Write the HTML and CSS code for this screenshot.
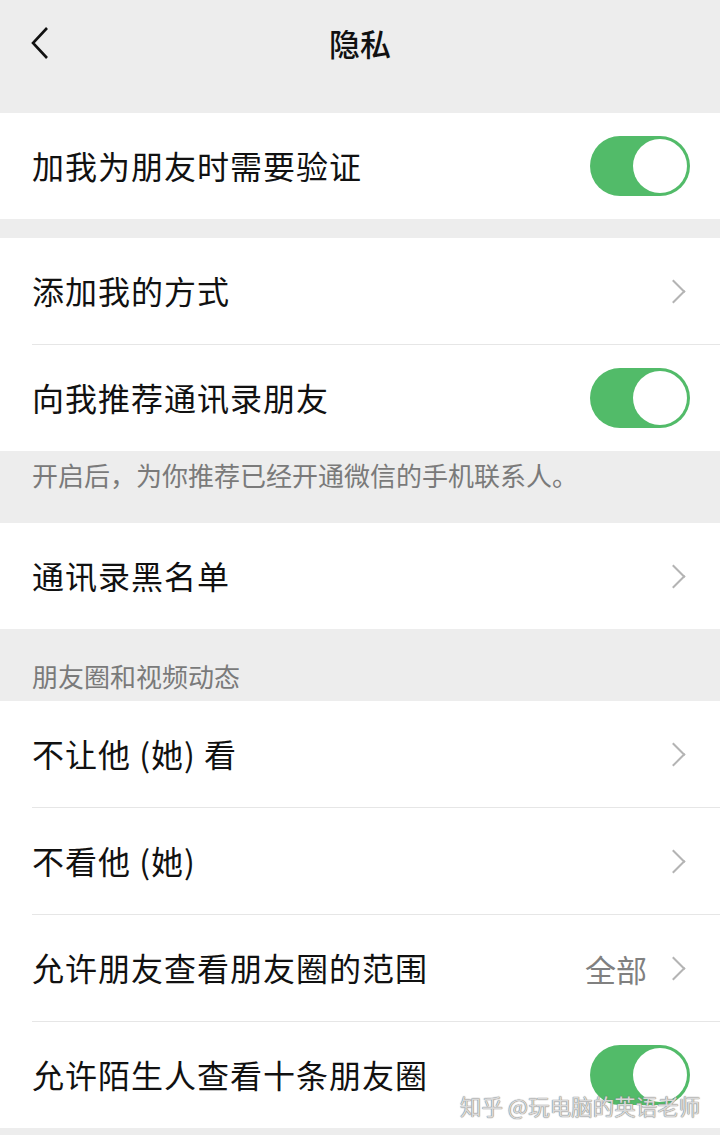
FILE: index.html
```html
<!DOCTYPE html>
<html lang="zh-CN">
  <head>
    <meta charset="UTF-8" />
    <meta name="viewport" content="width=device-width, initial-scale=1.0" />
    <title>隐私</title>
    <link rel="stylesheet" href="styles.css">
  </head>
  <body>
    <div class="nav">
      <svg class="back" width="24" height="34" viewBox="0 0 24 34">
        <path d="M19 2 L5 17 L19 32" fill="none" stroke="#111" stroke-width="2.6" />
      </svg>
      <div class="title">隐私</div>
    </div>

    <div class="group">
      <div class="cell">
        <div class="cell-body">
          <span class="label">加我为朋友时需要验证</span>
          <span class="switch on"></span>
        </div>
      </div>
    </div>

    <div class="group gap">
      <div class="cell">
        <div class="cell-body">
          <span class="label">添加我的方式</span>
          <span class="arrow"></span>
        </div>
      </div>
      <div class="cell">
        <div class="cell-body">
          <span class="label">向我推荐通讯录朋友</span>
          <span class="switch on"></span>
        </div>
      </div>
    </div>
    <div class="tip">开启后，为你推荐已经开通微信的手机联系人。</div>

    <div class="group">
      <div class="cell">
        <div class="cell-body">
          <span class="label">通讯录黑名单</span>
          <span class="arrow"></span>
        </div>
      </div>
    </div>
    <div class="section">朋友圈和视频动态</div>

    <div class="group">
      <div class="cell">
        <div class="cell-body">
          <span class="label">不让他 (她) 看</span>
          <span class="arrow"></span>
        </div>
      </div>
      <div class="cell">
        <div class="cell-body">
          <span class="label">不看他 (她)</span>
          <span class="arrow"></span>
        </div>
      </div>
      <div class="cell">
        <div class="cell-body">
          <span class="label">允许朋友查看朋友圈的范围</span>
          <span class="value">全部</span>
          <span class="arrow"></span>
        </div>
      </div>
      <div class="cell">
        <div class="cell-body">
          <span class="label">允许陌生人查看十条朋友圈</span>
          <span class="switch on"></span>
        </div>
      </div>
    </div>

    <div class="watermark">知乎 @玩电脑的英语老师</div>
  </body>
</html>
```

FILE: styles.css
```css
body {
  margin: 0;
  background: #ededed;
  font-family: "Noto Sans CJK SC", "Noto Sans", sans-serif;
  color: #111;
  position: relative;
  min-height: 1135px;
  overflow: hidden;
}
.nav {
  height: 84px;
  margin-bottom: 29px;
  display: flex;
  align-items: center;
  justify-content: center;
  position: relative;
}
.back {
  position: absolute;
  left: 28px;
  top: 26px;
}
.title {
  font-size: 31px;
  font-weight: 500;
}
.group {
  background: #fff;
}
.gap {
  margin-top: 19px;
}
.cell {
  padding-left: 32px;
}
.cell-body {
  height: 106px;
  display: flex;
  align-items: center;
  padding-right: 30px;
}
.cell + .cell .cell-body {
  border-top: 1px solid #e6e6e6;
}
.label {
  flex: 1;
  font-size: 32px;
  letter-spacing: 1px;
  margin-top: -2px;
}
.value {
  font-size: 31px;
  color: #808080;
  margin-right: 18px;
}
.arrow {
  width: 15px;
  height: 15px;
  border-top: 2px solid #b4b4b4;
  border-right: 2px solid #b4b4b4;
  transform: rotate(45deg);
  margin-right: 8px;
}
.switch {
  width: 100px;
  height: 60px;
  border-radius: 30px;
  background: #52bb69;
  position: relative;
}
.switch::after {
  content: "";
  position: absolute;
  right: 3px;
  top: 3px;
  width: 54px;
  height: 54px;
  border-radius: 50%;
  background: #fff;
}
.tip,
.section {
  height: 72px;
  padding-left: 32px;
  font-size: 26px;
  color: #7a7a7a;
  box-sizing: border-box;
}
.tip {
  padding-top: 5px;
}
.section {
  padding-top: 28px;
}
.watermark {
  position: absolute;
  left: 460px;
  top: 1090px;
  font-size: 21.5px;
  color: rgba(235, 235, 235, 0.85);
  text-shadow: 0 0 1px #777, 0 0 1px #777;
}
```
